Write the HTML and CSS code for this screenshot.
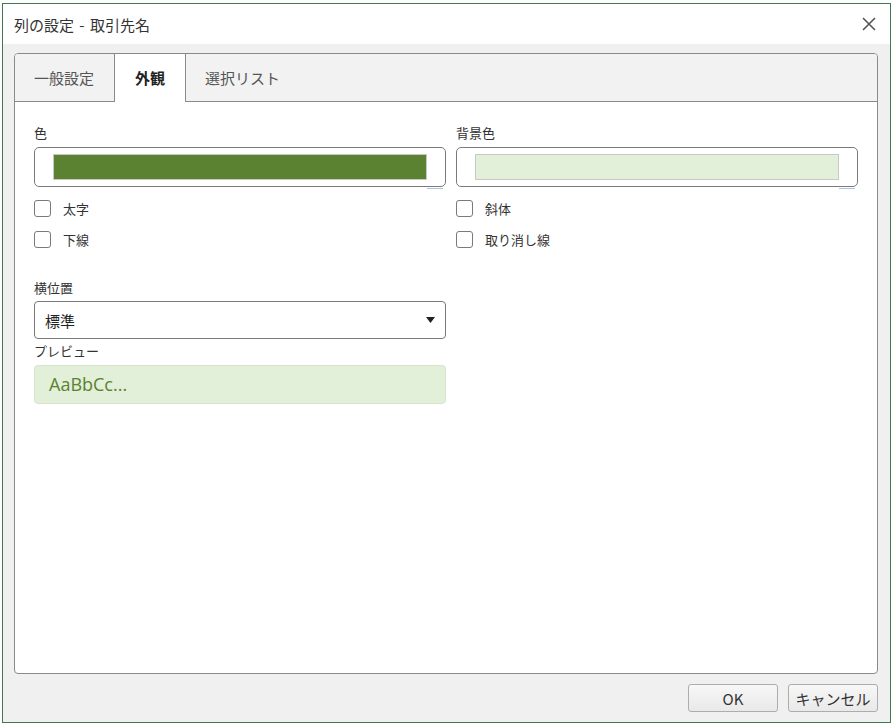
FILE: index.html
```html
<!DOCTYPE html>
<html lang="ja">
<head>
  <meta charset="UTF-8">
  <meta name="viewport" content="width=device-width, initial-scale=1.0">
  <title>列の設定 - 取引先名</title>
  <link rel="stylesheet" href="styles.css">
</head>
<body>
  <div class="window">
    <div class="titlebar">
      <span class="title">列の設定 - 取引先名</span>
      <button class="close-btn" aria-label="閉じる">
        <svg width="16" height="16" viewBox="0 0 16 16">
          <path d="M2 2 L14 14 M14 2 L2 14" stroke="#555" stroke-width="1.6" fill="none"/>
        </svg>
      </button>
    </div>

    <div class="dialog-body">
      <div class="panel">
        <ul class="tabs">
          <li class="tab">一般設定</li>
          <li class="tab active">外観</li>
          <li class="tab">選択リスト</li>
        </ul>

        <div class="tab-content">
          <div class="columns">
            <div class="col col-left">
              <div class="field-label">色</div>
              <div class="color-field">
                <div class="swatch swatch-fore"></div>
                <span class="focus-mark"></span>
              </div>
              <div class="check-list">
                <label class="check"><span class="box"></span>太字</label>
                <label class="check"><span class="box"></span>下線</label>
              </div>
            </div>
            <div class="col col-right">
              <div class="field-label">背景色</div>
              <div class="color-field">
                <div class="swatch swatch-back"></div>
                <span class="focus-mark"></span>
              </div>
              <div class="check-list">
                <label class="check"><span class="box"></span>斜体</label>
                <label class="check"><span class="box"></span>取り消し線</label>
              </div>
            </div>
          </div>

          <div class="lower">
            <div class="field-label label-align">横位置</div>
            <div class="select">
              <span>標準</span>
              <svg width="9" height="6" viewBox="0 0 9 6"><polygon points="0,0 9,0 4.5,6" fill="#222"/></svg>
            </div>
            <div class="field-label label-preview">プレビュー</div>
            <div class="preview">AaBbCc...</div>
          </div>
        </div>
      </div>

      <div class="footer">
        <button class="button">OK</button>
        <button class="button">キャンセル</button>
      </div>
    </div>
  </div>
</body>
</html>
```

FILE: styles.css
```css
:root {
  --text-color: #333;
  --border-color: #7a7a7a;
  --panel-border: #8a8a8a;
  --window-border: #3d7a4f;
  --gray-bg: #f0f0f0;
  --fore-color: #5b8231;
  --back-color: #e2efd9;
}

* {
  box-sizing: border-box;
  margin: 0;
  padding: 0;
}

body {
  font-family: "Noto Sans CJK JP", "Noto Sans", sans-serif;
  color: var(--text-color);
  background-color: #fff;
}

.window {
  margin: 3px 0 0 2px;
  width: 889px;
  height: 720px;
  border: 1px solid var(--window-border);
  display: flex;
  flex-direction: column;
}

.titlebar {
  height: 40px;
  display: flex;
  align-items: center;
  justify-content: space-between;
  padding: 0 11px 0 11px;
  background-color: #fff;
}

.title {
  font-size: 15px;
  color: #333;
  line-height: 20px;
  padding-top: 1px;
  word-spacing: 2px;
}

.close-btn {
  border: none;
  background: none;
  width: 18px;
  height: 18px;
  display: flex;
  align-items: center;
  justify-content: center;
  margin-right: 1px;
}

.dialog-body {
  flex: 1;
  background-color: var(--gray-bg);
  padding: 9px 12px 0 11px;
  display: flex;
  flex-direction: column;
}

.panel {
  height: 621px;
  border: 1px solid var(--panel-border);
  border-radius: 4px;
  background-color: #fff;
  display: flex;
  flex-direction: column;
  overflow: hidden;
}

.tabs {
  display: flex;
  list-style: none;
  height: 48px;
  background-color: #f2f2f2;
  border-bottom: 1px solid var(--panel-border);
}

.tab {
  padding: 0 20px 0 19px;
  line-height: 47px;
  font-size: 15px;
  color: #555;
}

.tab.active {
  background-color: #fff;
  color: #222;
  font-weight: bold;
  border-left: 1px solid var(--panel-border);
  border-right: 1px solid var(--panel-border);
  height: 48px;
  padding: 0 20px;
}

.tab-content {
  padding: 22px 18px 0 19px;
}

.columns {
  display: grid;
  grid-template-columns: 412px 402px;
  column-gap: 10px;
}

.field-label {
  font-size: 13px;
  line-height: 18px;
  color: #333;
  margin-bottom: 5px;
}

.color-field {
  position: relative;
  height: 40px;
  border: 1px solid var(--border-color);
  border-radius: 5px;
  padding: 6px 18px;
  background-color: #fff;
}

.swatch {
  height: 26px;
  border: 1px solid #c8c8c8;
}

.swatch-fore {
  background-color: var(--fore-color);
}

.swatch-back {
  background-color: var(--back-color);
}

.focus-mark {
  position: absolute;
  right: 2px;
  bottom: -3px;
  width: 16px;
  height: 1px;
  background-color: #a9c2e6;
}

.check-list {
  margin-top: 13px;
  display: flex;
  flex-direction: column;
  gap: 14px;
}

.check {
  display: flex;
  align-items: center;
  gap: 12px;
  height: 17px;
  font-size: 13px;
  line-height: 17px;
  color: #333;
}

.box {
  width: 17px;
  height: 17px;
  border: 1px solid var(--border-color);
  border-radius: 3px;
  background-color: #fff;
}

.lower {
  width: 412px;
}

.label-align {
  margin-top: 31px;
  margin-bottom: 4px;
}

.select {
  height: 38px;
  border: 1px solid var(--border-color);
  border-radius: 4px;
  display: flex;
  align-items: center;
  justify-content: space-between;
  padding: 0 10px 0 10px;
  font-size: 15px;
  color: #222;
}

.label-preview {
  margin-top: 3px;
}

.preview {
  height: 39px;
  border: 1px solid #d6e3cd;
  border-radius: 4px;
  background-color: var(--back-color);
  color: var(--fore-color);
  font-family: "Open Sans", "Noto Sans", sans-serif;
  font-size: 18px;
  line-height: 37px;
  padding-left: 14px;
}

.footer {
  display: flex;
  justify-content: flex-end;
  gap: 10px;
  padding-top: 10px;
}

.button {
  width: 90px;
  height: 28px;
  border: 1px solid #adadad;
  border-radius: 3px;
  background: linear-gradient(#f7f7f7, #e9e9e9);
  font-family: "Noto Sans CJK JP", "Noto Sans", sans-serif;
  font-size: 15px;
  color: #333;
}
```
